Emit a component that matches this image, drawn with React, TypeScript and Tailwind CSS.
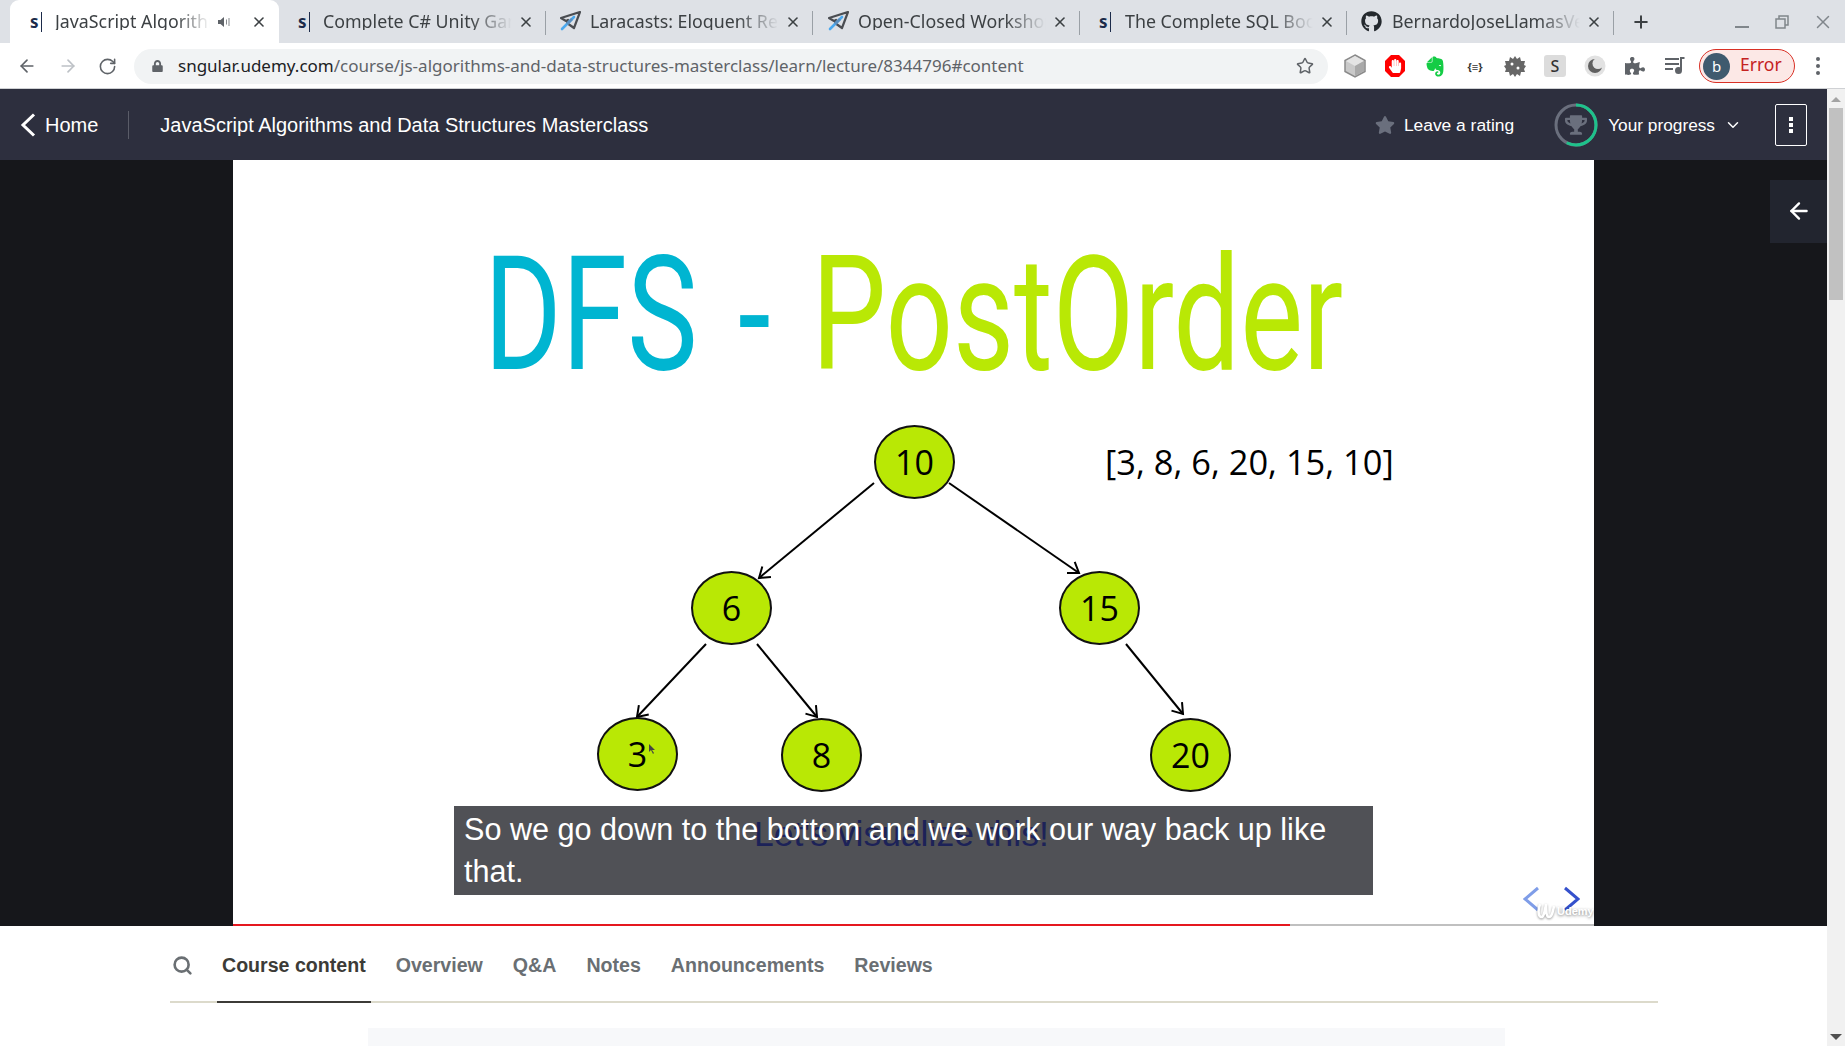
import React from 'react';
import { ArrowLeft, ArrowRight, ChevronDown, Plus, RotateCw, Search, Star, X } from 'lucide-react';
import { FaGithub, FaLock, FaPuzzlePiece, FaStar, FaTrophy, FaHandPaper } from 'react-icons/fa';
import { SiEvernote } from 'react-icons/si';

const CHROME_FONT = 'font-["Noto_Sans","Open_Sans",sans-serif]';

const Udemy = () => (
  <span className="flex h-5 w-[20px] items-center gap-[2px]">
    <span className="text-[17px] leading-none font-bold text-[#1c2b4a]">s</span>
    <span className="h-[20px] w-[1.5px] bg-[#1c2b4a]" />
  </span>
);

const Plane = () => (
  <svg width="21" height="21" viewBox="0 0 21 21">
    <path d="M20 1 1 7l5 3 2-1-1 3 7 5z" fill="none" stroke="#4a4d52" strokeWidth="2.2" strokeLinejoin="round" />
    <path d="M14 6 2 18" stroke="#4aa8ee" strokeWidth="2.6" strokeLinecap="round" />
    <path d="M12 8 7 13" stroke="#5a8fc0" strokeWidth="2.6" />
  </svg>
);

const Speaker = () => (
  <svg width="13" height="12" viewBox="0 0 13 12" fill="#5f6368">
    <path d="M0 4h2.5L6 1v10L2.500 8H0z" />
    <path d="M8 3.500v5h1v-5zM10.500 2v8h1V2z" opacity="0.75" />
  </svg>
);

interface TabProps {
  icon: React.ReactNode;
  title: string;
  active?: boolean;
  sound?: boolean;
  divider?: boolean;
  inset: string;
  gap: string;
}

const Tab: React.FC<TabProps> = ({ icon, title, active, sound, divider, inset, gap }) => (
  <div className={`relative flex h-full items-center pr-[12px] ${inset} ${active ? 'w-[269px] rounded-t-[9px] bg-white' : 'w-[267px]'}`}>
    {icon}
    <span className={`min-w-0 flex-1 overflow-hidden text-[17.800px] leading-none whitespace-nowrap text-[#3c4043] [mask-image:linear-gradient(to_right,black_78%,transparent_100%)] ${gap}`}>
      {title}
    </span>
    {sound && <span className="mr-[14px] ml-[8px]"><Speaker /></span>}
    <X className="ml-[6px] h-[16px] w-[16px] shrink-0 text-[#3c4043]" strokeWidth={2.4} />
    {divider && <span className="absolute top-[11px] right-0 h-[24px] w-px bg-[#9aa0a6]" />}
  </div>
);

const TabStrip = () => (
  <div className={`flex h-[43px] items-stretch bg-[#dee1e6] pl-[10px] ${CHROME_FONT}`}>
    <Tab active sound icon={<Udemy />} title="JavaScript Algorithms and Data Structures" inset="pl-[20px]" gap="ml-[5px]" />
    <Tab divider icon={<Udemy />} title="Complete C# Unity Game Developer" inset="pl-[19px]" gap="ml-[5px]" />
    <Tab divider icon={<Plane />} title="Laracasts: Eloquent Relationships" inset="pl-[14px]" gap="ml-[9px]" />
    <Tab divider icon={<Plane />} title="Open-Closed Workshop Series" inset="pl-[15px]" gap="ml-[9px]" />
    <Tab divider icon={<Udemy />} title="The Complete SQL Bootcamp" inset="pl-[19px]" gap="ml-[6px]" />
    <Tab divider icon={<FaGithub className="h-[21px] w-[21px] shrink-0 text-[#24292e]" />} title="BernardoJoseLlamasVerna" inset="pl-[14px]" gap="ml-[10px]" />
    <div className="ml-[17px] flex items-center">
      <Plus className="h-[20px] w-[20px] text-[#3c4043]" strokeWidth={2.4} />
    </div>
    <div className="ml-auto flex items-center pr-[11px]">
      <span className="mt-[10px] h-[2px] w-[14px] bg-[#80868b]" />
      <svg className="ml-[26px]" width="14" height="14" viewBox="0 0 14 14" fill="none" stroke="#80868b" strokeWidth="1.500">
        <rect x="1" y="4" width="9" height="9" />
        <path d="M4 4V1h9v9h-3" />
      </svg>
      <X className="ml-[23px] h-[22px] w-[22px] text-[#80868b]" strokeWidth={1.6} />
    </div>
  </div>
);

const Cube = () => (
  <svg width="22" height="24" viewBox="0 0 22 24">
    <path d="M11 1 21 6.500v11L11 23 1 17.500v-11z" fill="#c9c9c9" stroke="#8a8a8a" strokeWidth="1.500" />
    <path d="M11 12 2 7l9-5 9 5z" fill="#e4e4e4" />
    <path d="M11 12v10l9-5V7z" fill="#a9a9a9" />
  </svg>
);

const StopHand = () => (
  <span className="relative flex h-[24px] w-[22px] items-center justify-center">
    <svg className="absolute inset-0" width="22" height="24" viewBox="0 0 22 24">
      <path d="M7 1h8l6 6v10l-6 6H7l-6-6V7z" fill="#f00" />
    </svg>
    <FaHandPaper className="relative h-[14px] w-[14px] text-white" />
  </span>
);

const BugGear = () => (
  <svg width="22" height="22" viewBox="0 0 22 22">
    <path d="M11 1l2 3 3-2 1 4 4 0-1 4 2 1-2 3 1 3-4 0-1 4-3-2-2 3-2-3-3 2-1-4-4 0 1-3-2-3 2-1-1-4 4 0 1-4 3 2z" fill="#666" />
    <circle cx="8" cy="9" r="1.500" fill="#fff" />
    <circle cx="14" cy="13" r="1.500" fill="#fff" />
  </svg>
);

const SBox = () => (
  <span className="flex h-[22px] w-[22px] items-center justify-center rounded-[3px] bg-[#dcdcdc] text-[16px] leading-none font-medium text-[#333]">S</span>
);

const MoonIcon = () => (
  <svg width="22" height="22" viewBox="0 0 22 22">
    <circle cx="11" cy="11" r="10.500" fill="#e2e2e2" />
    <circle cx="11" cy="11" r="7" fill="#5f5f5f" />
    <circle cx="14" cy="8.500" r="5.500" fill="#e2e2e2" />
  </svg>
);

const QueueIcon = () => (
  <svg width="20" height="18" viewBox="0 0 20 18" fill="none" stroke="#5f6368" strokeWidth="2">
    <path d="M0 2h14M0 7h14M0 12h8" />
    <path d="M16 13V1h3.500" />
    <circle cx="13.500" cy="13.500" r="2.500" fill="#5f6368" />
  </svg>
);

const Toolbar = () => (
  <div className={`flex h-[46px] items-center border-b border-[#cfd1d4] bg-white pt-[1px] pl-[17px] ${CHROME_FONT}`}>
    <ArrowLeft className="h-[20px] w-[20px] text-[#5f6368]" strokeWidth={2} />
    <ArrowRight className="ml-[21px] h-[20px] w-[20px] text-[#bdc1c6]" strokeWidth={2} />
    <RotateCw className="ml-[20px] h-[19px] w-[19px] text-[#5f6368]" strokeWidth={2} />
    <div className="ml-[17px] flex h-[35px] w-[1194px] items-center rounded-full bg-[#f1f3f4] pr-[14px] pl-[18px]">
      <FaLock className="h-[12px] w-[11px] text-[#5f6368]" />
      <span className="-mt-[2px] ml-[15px] text-[17px] leading-none whitespace-nowrap text-[#5f6368]">
        <span className="text-[#202124]">sngular.udemy.com</span>/course/js-algorithms-and-data-structures-masterclass/learn/lecture/8344796#content
      </span>
      <Star className="ml-auto h-[18px] w-[18px] text-[#5f6368]" strokeWidth={2} />
    </div>
    <div className="ml-[7px] flex items-center">
      <span className="flex w-[40px] justify-center"><Cube /></span>
      <span className="flex w-[40px] justify-center"><StopHand /></span>
      <span className="flex w-[40px] justify-center"><SiEvernote className="h-[23px] w-[20px] text-[#14cc45]" /></span>
      <span className="flex w-[40px] justify-center text-[11px] leading-none font-bold text-[#333]">{'{≡}'}</span>
      <span className="flex w-[40px] justify-center"><BugGear /></span>
      <span className="flex w-[40px] justify-center"><SBox /></span>
      <span className="flex w-[40px] justify-center"><MoonIcon /></span>
      <span className="flex w-[40px] justify-center"><FaPuzzlePiece className="h-[20px] w-[20px] text-[#5f6368]" /></span>
      <span className="flex w-[40px] justify-center"><QueueIcon /></span>
    </div>
    <div className="ml-[4px] flex h-[34px] w-[96px] items-center rounded-full border border-[#d93025] bg-[#fce8e6] pl-[3px]">
      <span className="flex h-[27px] w-[27px] items-center justify-center rounded-full bg-[#3f5a6e] text-[15px] leading-none text-white">b</span>
      <span className="-mt-[2px] ml-[10px] text-[17.500px] leading-none text-[#c5221f]">Error</span>
    </div>
    <div className="ml-[21px] flex flex-col gap-[3px]">
      <span className="h-[4px] w-[4px] rounded-full bg-[#5f6368]" />
      <span className="h-[4px] w-[4px] rounded-full bg-[#5f6368]" />
      <span className="h-[4px] w-[4px] rounded-full bg-[#5f6368]" />
    </div>
  </div>
);

const ProgressRing = () => (
  <svg width="44" height="44" viewBox="0 0 44 44">
    <circle cx="22" cy="22" r="20" fill="none" stroke="#6a6f7d" strokeWidth="3" />
    <circle cx="22" cy="22" r="20" fill="none" stroke="#1ec28b" strokeWidth="3" strokeDasharray="72 126" transform="rotate(-90 22 22)" />
  </svg>
);

const CourseHeader = () => (
  <header className='flex h-[71px] shrink-0 items-center bg-[#2d2f3e] font-["Liberation_Sans",Arial,sans-serif] text-white'>
    <svg className="ml-[20px]" width="16" height="24" viewBox="0 0 16 24" fill="none" stroke="#fff" strokeWidth="3">
      <path d="M14 1.500 3 12l11 10.500" />
    </svg>
    <span className="ml-[9px] text-[20px] leading-none">Home</span>
    <span className="ml-[30px] h-[28px] w-px bg-[#5a5c68]" />
    <span className="ml-[31px] text-[20px] leading-none">JavaScript Algorithms and Data Structures Masterclass</span>
    <div className="ml-auto flex items-center pr-[20px]">
      <FaStar className="h-[20px] w-[20px] text-[#6a6f7d]" />
      <span className="mt-[2px] ml-[9px] text-[17.400px] leading-none">Leave a rating</span>
      <div className="relative ml-[40px] flex h-[44px] w-[44px] items-center justify-center">
        <span className="absolute inset-0"><ProgressRing /></span>
        <FaTrophy className="h-[22px] w-[22px] text-[#6a6f7d]" />
      </div>
      <span className="mt-[2px] ml-[10px] text-[17.280px] leading-none">Your progress</span>
      <ChevronDown className="ml-[9px] h-[18px] w-[18px]" strokeWidth={2} />
      <button className="ml-[33px] flex h-[42px] w-[32px] flex-col items-center justify-center gap-[2px] rounded-[2px] border border-white">
        <span className="h-[4px] w-[4px] bg-white" />
        <span className="h-[4px] w-[4px] bg-white" />
        <span className="h-[4px] w-[4px] bg-white" />
      </button>
    </div>
  </header>
);

// positions are relative to the slide, which starts at x 233 / y 160
const NODES = [
  { label: '10', x: 641, y: 265 },
  { label: '6', x: 458, y: 411 },
  { label: '15', x: 826, y: 411 },
  { label: '3', x: 364, y: 557 },
  { label: '8', x: 548, y: 558 },
  { label: '20', x: 917, y: 558 },
];

const ARROWS = [
  [641, 323, 526, 418],
  [716, 323, 846, 413],
  [473, 484, 404, 557],
  [524, 484, 584, 557],
  [893, 484, 950, 554],
];

const TreeDiagram = () => (
  <>
    <svg className="absolute inset-0" width="1361" height="766" viewBox="0 0 1361 766" fill="none" stroke="#000" strokeWidth="2">
      {ARROWS.map(([x1, y1, x2, y2]) => {
        const a = Math.atan2(y2 - y1, x2 - x1);
        const h1 = [x2 - 12 * Math.cos(a - 0.6), y2 - 12 * Math.sin(a - 0.6)];
        const h2 = [x2 - 12 * Math.cos(a + 0.6), y2 - 12 * Math.sin(a + 0.6)];
        return (
          <g key={`${x1}-${x2}`}>
            <line x1={x1} y1={y1} x2={x2} y2={y2} />
            <polyline points={`${h1[0]},${h1[1]} ${x2},${y2} ${h2[0]},${h2[1]}`} />
          </g>
        );
      })}
    </svg>
    {NODES.map((n) => (
      <div
        key={n.label}
        className='absolute flex h-[74px] w-[81px] items-center justify-center rounded-[50%] border-2 border-[#111] bg-[#b9e805] font-["Open_Sans",sans-serif] text-[34px] leading-none text-black'
        style={{ left: n.x, top: n.y }}
      >
        {n.label}
      </div>
    ))}
    <svg className="absolute top-[584px] left-[415px]" width="8" height="10" viewBox="0 0 8 10">
      <path d="M1 0v8l2-2 2 4 1-1-2-3h3z" fill="#444" />
    </svg>
    <div className='absolute top-[281px] left-[872px] font-["Open_Sans",sans-serif] text-[34.400px] leading-[42px] whitespace-nowrap text-black'>
      [3, 8, 6, 20, 15, 10]
    </div>
  </>
);

const Caption = () => (
  <div className='absolute top-[646px] left-[221px] h-[89px] w-[919px] bg-[#505156] px-[10px] pt-[2px] font-["Liberation_Sans",Arial,sans-serif] text-[30.600px] leading-[42px] text-white'>
    <span className="absolute top-[4px] left-[300px] text-[35.500px] leading-[48px] whitespace-nowrap text-[#1c2258]">Let's visualize this!</span>
    <span className="relative">So we go down to the bottom and we work our way back up like that.</span>
  </div>
);

const SlideNav = () => (
  <>
    <svg className="absolute top-[726px] left-[1290px]" width="18" height="26" viewBox="0 0 18 26" fill="none" stroke="#7f9de8" strokeWidth="3">
      <path d="M15 2 2 13l13 11" />
    </svg>
    <svg className="absolute top-[726px] left-[1329px]" width="18" height="26" viewBox="0 0 18 26" fill="none" stroke="#3551cc" strokeWidth="3">
      <path d="M3 2l13 11L3 24" />
    </svg>
    <div className='absolute top-[742px] left-[1304px] flex items-center font-["Liberation_Sans",Arial,sans-serif] text-white [text-shadow:0_1px_3px_rgba(0,0,0,0.5)]'>
      <svg width="18" height="18" viewBox="0 0 18 18" fill="none" stroke="#fff" strokeWidth="2.500" className="drop-shadow-[0_1px_1px_rgba(0,0,0,0.4)]">
        <path d="M3 2c-2 6-2 12 1 13s4-8 5-13c0 6 0 13 3 13s4-6 5-11" />
      </svg>
      <span className="ml-[2px] text-[11px] leading-none font-bold">Udemy</span>
    </div>
  </>
);

const Slide = () => (
  <div className="relative h-[766px] w-[1361px] overflow-hidden bg-white">
    <h1 className='absolute top-[60px] left-[251px] origin-left scale-x-[0.745] font-["Roboto",sans-serif] text-[159px] leading-[190px] font-normal whitespace-nowrap text-[#00b5d1] [word-spacing:15px]'>
      DFS - <span className="text-[#b9e805]">PostOrder</span>
    </h1>
    <TreeDiagram />
    <Caption />
    <SlideNav />
    <div className="absolute right-0 bottom-0 left-0 h-[2px] bg-[#c0c0c0]">
      <div className="h-full w-[1057px] bg-[#e5181f]" />
    </div>
  </div>
);

const VideoStage = () => (
  <div className="relative flex h-[766px] shrink-0 justify-center bg-[#16171b]">
    <Slide />
    <div className="absolute top-[20px] right-0 flex h-[63px] w-[57px] items-center justify-center bg-[#22252f] pb-[2px]">
      <ArrowLeft className="h-[26px] w-[26px] text-white" strokeWidth={2.2} />
    </div>
  </div>
);

const TABS = ['Overview', 'Q&A', 'Notes', 'Announcements', 'Reviews'];

const ContentTabs = () => (
  <div className='flex min-h-0 flex-1 flex-col bg-white font-["Liberation_Sans",Arial,sans-serif]'>
    <div className="mt-[7px] ml-[170px] flex h-[70px] w-[1488px] shrink-0 items-stretch border-b-2 border-[#dcdacb]">
      <div className="flex w-[47px] items-center pb-[4px] pl-[2px]">
        <Search className="h-[21px] w-[21px] text-[#6a6f73]" strokeWidth={3} />
      </div>
      <div className="-mb-[2px] flex items-center border-b-2 border-[#3c3b37] px-[5px] pb-[2px] text-[19.600px] font-bold text-[#3c3b37]">
        Course content
      </div>
      <div className="flex items-center gap-[30px] pb-[2px] pl-[25px] text-[19.600px] font-bold text-[#6a6f73]">
        {TABS.map((t) => (
          <span key={t}>{t}</span>
        ))}
      </div>
    </div>
    <div className="mt-[25px] ml-[368px] w-[1137px] flex-1 bg-[#f7f8fa]" />
  </div>
);

const Scrollbar = () => (
  <div className="flex w-[18px] shrink-0 flex-col items-center bg-[#f1f1f1]">
    <span className="mt-[8px] h-0 w-0 border-x-[5px] border-b-[5px] border-x-transparent border-b-[#a3a3a3]" />
    <span className="mt-[6px] h-[192px] w-[14px] bg-[#c1c1c1]" />
    <span className="mt-auto mb-[6px] h-0 w-0 border-x-[6px] border-t-[6px] border-x-transparent border-t-[#505050]" />
  </div>
);

export default function App() {
  return (
    <div className="flex h-[1046px] w-[1845px] flex-col overflow-hidden bg-white">
      <TabStrip />
      <Toolbar />
      <div className="flex min-h-0 flex-1">
        <div className="flex min-w-0 flex-1 flex-col">
          <CourseHeader />
          <VideoStage />
          <ContentTabs />
        </div>
        <Scrollbar />
      </div>
    </div>
  );
}
